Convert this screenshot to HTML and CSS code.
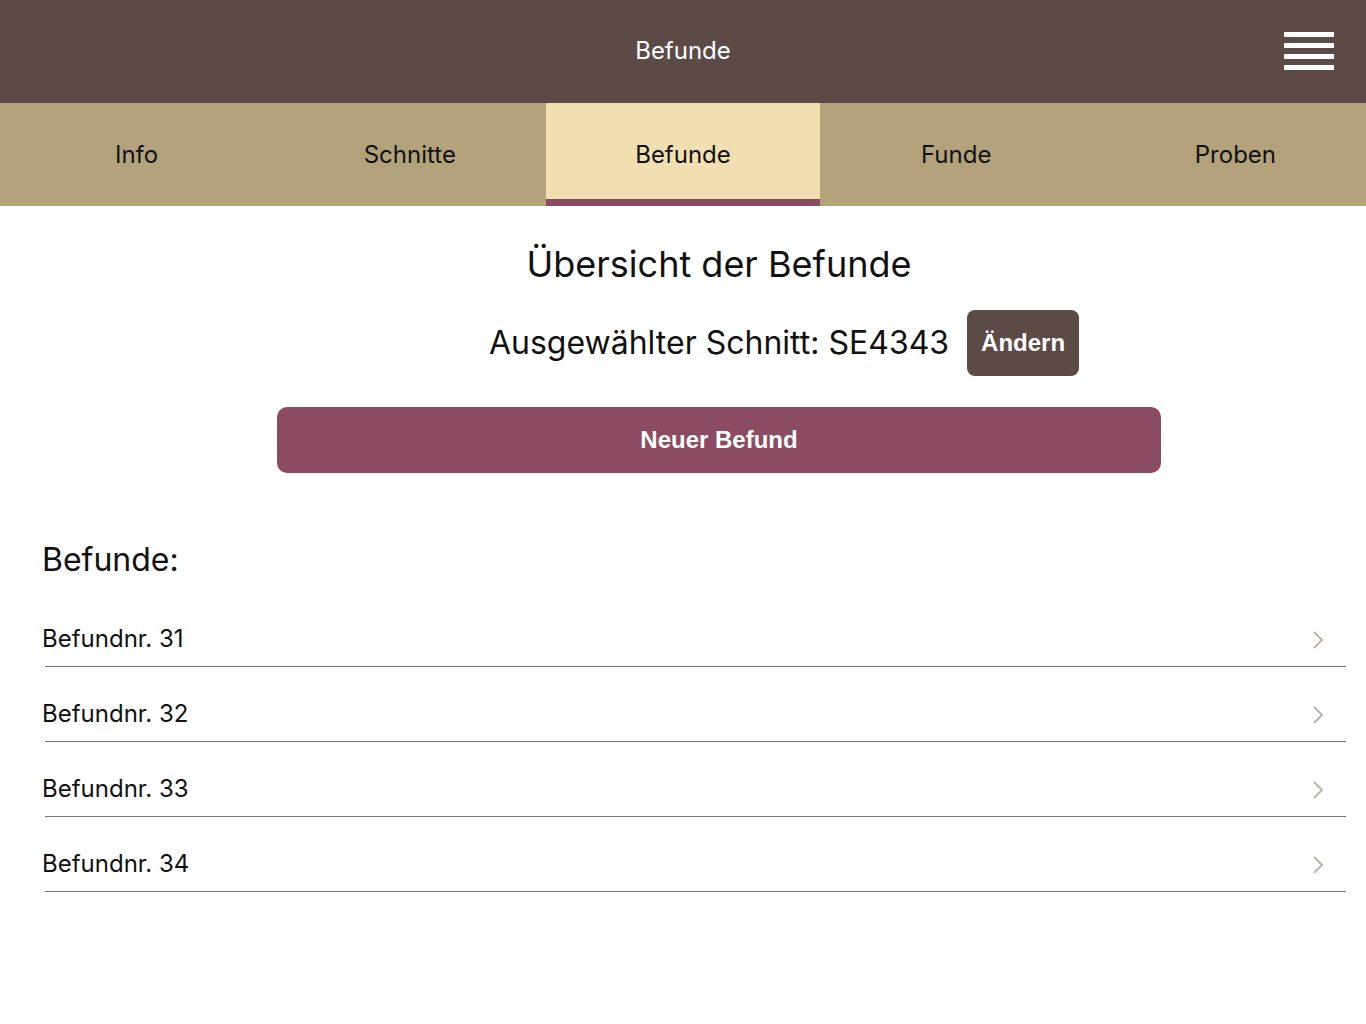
FILE: index.html
```html
<!DOCTYPE html>
<html lang="de">
<head>
<meta charset="utf-8">
<title>Befunde</title>
<link rel="stylesheet" href="styles.css">
</head>
<body>
<header class="topbar">
  <div class="topbar-spacer"></div>
  <div class="topbar-title">Befunde</div>
  <button class="menu-btn" aria-label="Menü">
    <span></span><span></span><span></span><span></span>
  </button>
</header>
<nav class="tabs">
  <div class="tab">Info</div>
  <div class="tab">Schnitte</div>
  <div class="tab active">Befunde</div>
  <div class="tab">Funde</div>
  <div class="tab tab-last">Proben</div>
</nav>
<main class="content">
  <section class="overview">
    <h1 class="title">Übersicht der Befunde</h1>
    <div class="selected-row">
      <span class="selected-text">Ausgewählter Schnitt: SE4343</span>
      <button class="btn-change">Ändern</button>
    </div>
    <button class="btn-new">Neuer Befund</button>
  </section>
  <h2 class="list-heading">Befunde:</h2>
  <ul class="list">
    <li class="row"><span class="row-label">Befundnr. 31</span><svg class="chev" viewBox="0 0 12 20" width="12" height="20"><path d="M2 2 L10 10 L2 18" fill="none" stroke="#bbb3a8" stroke-width="2"/></svg></li>
    <li class="row"><span class="row-label">Befundnr. 32</span><svg class="chev" viewBox="0 0 12 20" width="12" height="20"><path d="M2 2 L10 10 L2 18" fill="none" stroke="#bbb3a8" stroke-width="2"/></svg></li>
    <li class="row"><span class="row-label">Befundnr. 33</span><svg class="chev" viewBox="0 0 12 20" width="12" height="20"><path d="M2 2 L10 10 L2 18" fill="none" stroke="#bbb3a8" stroke-width="2"/></svg></li>
    <li class="row"><span class="row-label">Befundnr. 34</span><svg class="chev" viewBox="0 0 12 20" width="12" height="20"><path d="M2 2 L10 10 L2 18" fill="none" stroke="#bbb3a8" stroke-width="2"/></svg></li>
  </ul>
</main>
</body>
</html>
```

FILE: styles.css
```css
* { box-sizing: border-box; }
html, body { margin: 0; padding: 0; background: #ffffff; }
body {
  font-family: Inter, "Noto Sans", sans-serif;
  color: #111;
  width: 1366px;
}

.topbar {
  height: 103px;
  background: #5c4a46;
  display: grid;
  grid-template-columns: 1fr auto 1fr;
  align-items: center;
}
.topbar-title {
  color: #ffffff;
  font-size: 24px;
  line-height: 30px;
  margin-top: -2px;
}
.menu-btn {
  justify-self: end;
  margin-right: 32px;
  margin-top: -2px;
  width: 50px;
  padding: 0;
  border: 0;
  background: transparent;
  display: flex;
  flex-direction: column;
  gap: 6px;
}
.menu-btn span {
  display: block;
  height: 5px;
  width: 50px;
  background: #ffffff;
}

.tabs {
  display: grid;
  grid-template-columns: repeat(5, 1fr);
  height: 103px;
  background: #b3a27c;
}
.tab {
  display: flex;
  align-items: center;
  justify-content: center;
  font-size: 24px;
  color: #111;
}
.tab-last { padding-left: 12px; }
.tab.active {
  background: #f1dfb1;
  border-bottom: 7px solid #8b4b62;
  padding-top: 7px;
}

.content { padding: 0; }

.overview {
  margin-left: 72px;
  padding-top: 36px;
  display: flex;
  flex-direction: column;
  align-items: center;
}
.title {
  margin: 0;
  font-weight: 400;
  font-size: 36px;
  line-height: 44px;
  color: #111;
}
.selected-row {
  margin-top: 24px;
  width: 100%;
  display: grid;
  grid-template-columns: 1fr auto 1fr;
  align-items: center;
}
.selected-text {
  grid-column: 2;
  font-size: 32px;
  line-height: 40px;
}
.btn-change {
  grid-column: 3;
  justify-self: start;
  margin-left: 18px;
  height: 66px;
  padding: 0 14px;
  border: 0;
  border-radius: 8px;
  background: #5c4a46;
  color: #fff;
  font-family: "Liberation Sans", Arial, sans-serif;
  font-weight: 700;
  font-size: 24px;
}
.btn-new {
  margin-top: 31px;
  width: 884px;
  height: 66px;
  border: 0;
  border-radius: 10px;
  background: #8b4b62;
  color: #fff;
  font-family: "Liberation Sans", Arial, sans-serif;
  font-weight: 700;
  font-size: 24px;
}

.list-heading {
  margin: 67px 0 0 42px;
  font-weight: 400;
  font-size: 32px;
  line-height: 40px;
  color: #111;
}
.list {
  list-style: none;
  margin: 12px 20px 0 45px;
  padding: 0;
}
.row {
  height: 75px;
  border-bottom: 1px solid #777;
  display: flex;
  align-items: flex-end;
  justify-content: space-between;
  padding: 0 22px 15px 0;
}
.row-label {
  margin-left: -3px;
  font-size: 24px;
  line-height: 24px;
  color: #111;
}
.chev {
  margin-bottom: 1px;
}
```
